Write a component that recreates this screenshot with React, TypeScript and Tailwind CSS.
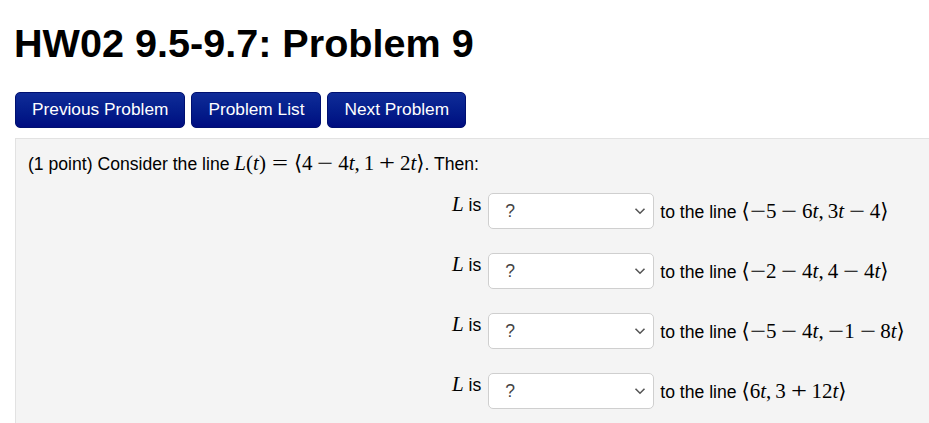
import React from "react";

const serif = { fontFamily: '"Liberation Serif", "DejaVu Serif", serif' };

function M({ children }: { children: React.ReactNode }) {
  return (
    <span className="text-[21px] whitespace-nowrap" style={serif}>
      {children}
    </span>
  );
}
const I = ({ c }: { c: string }) => <span className="italic">{c}</span>;
const Glyph = ({ c }: { c: string }) => (
  <span className="inline-block scale-x-[1.35]">{c}</span>
);
const Op = ({ c, s = 0.222 }: { c: string; s?: number }) => (
  <span
    className="inline-block w-[0.778em] text-center"
    style={{ marginLeft: `${s}em`, marginRight: `${s}em` }}
  >
    <Glyph c={c} />
  </span>
);
const Neg = () => (
  <span className="inline-block w-[0.778em] text-center">
    <Glyph c="−" />
  </span>
);
const Open = () => <span className="inline-block w-[0.389em] text-center font-light">⟨</span>;
const Close = () => <span className="inline-block w-[0.389em] text-center font-light">⟩</span>;
const Comma = () => <span className="inline-block w-[0.445em]">,</span>;

const rows: React.ReactNode[] = [
  <>
    <Open />
    <Neg />5<Op c="−" />6<I c="t" />
    <Comma />3<I c="t" />
    <Op c="−" />4<Close />
  </>,
  <>
    <Open />
    <Neg />2<Op c="−" />4<I c="t" />
    <Comma />4<Op c="−" />4<I c="t" />
    <Close />
  </>,
  <>
    <Open />
    <Neg />5<Op c="−" />4<I c="t" />
    <Comma />
    <Neg />1<Op c="−" />8<I c="t" />
    <Close />
  </>,
  <>
    <Open />6<I c="t" />
    <Comma />3<Op c="+" />12<I c="t" />
    <Close />
  </>,
];

export default function App() {
  return (
    <div
      className="w-[929px] h-[423px] overflow-hidden bg-white text-black pl-[15px]"
      style={{ fontFamily: '"Liberation Sans", Arial, sans-serif' }}
    >
      <h1 className="text-[39.6px] font-bold leading-[45px] mt-[21px] ml-[-1px]">
        HW02 9.5-9.7: Problem 9
      </h1>
      <div className="flex gap-[6px] mt-[26px]">
        {["Previous Problem", "Problem List", "Next Problem"].map((t) => (
          <div
            key={t}
            className="h-[36px] px-[16px] flex items-center rounded-[5px] border border-[#001070] bg-gradient-to-b from-[#102c98] to-[#000c80] text-white text-[17.3px]"
          >
            {t}
          </div>
        ))}
      </div>
      <div className="mt-[10px] border-t border-l border-[#e2e2e2] bg-[#f4f4f4] h-[300px] pt-[12px] pl-[12px] text-[17.6px] leading-[24px]">
        <div>
          (1 point) Consider the line{" "}
          <M>
            <I c="L" />(<I c="t" />)<Op c="=" s={0.278} />
            <Open />4<Op c="−" />4<I c="t" />
            <Comma />1<Op c="+" />2<I c="t" />
            <Close />
          </M>
          . Then:
        </div>
        <div className="flex flex-col gap-[24px] mt-[17px] pl-[424px]">
          {rows.map((r, i) => (
            <div key={i} className="flex h-[36px]">
              <div className="self-start mt-[-1px] whitespace-nowrap">
                <M>
                  <I c="L" />
                </M>{" "}
                is
              </div>
              <div className="ml-[7px] w-[166px] h-[36px] shrink-0 bg-white border border-[#cfcfcf] rounded-[5px] flex items-center justify-between pl-[16px] pr-[7px]">
                <span className="text-[#444]">?</span>
                <svg width="12" height="8" viewBox="0 0 12 8" fill="none">
                  <path d="M1.5 1.8 L6 6.2 L10.5 1.8" stroke="#555" strokeWidth="1.6" />
                </svg>
              </div>
              <div className="ml-[6px] self-center whitespace-nowrap">
                to the line <M>{r}</M>
              </div>
            </div>
          ))}
        </div>
      </div>
    </div>
  );
}
